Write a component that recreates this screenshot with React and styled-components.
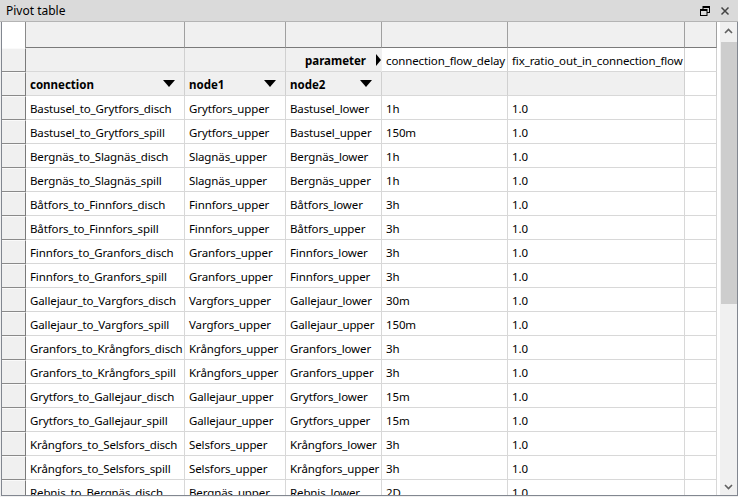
import React from "react";
import styled, { createGlobalStyle } from "styled-components";

const GlobalStyle = createGlobalStyle`
  html, body { margin: 0; padding: 0; background: #f0f0f0; }
  body { font-family: "Noto Sans", "Open Sans", sans-serif; font-size: 11.5px; color: #000; }
  * { box-sizing: border-box; }
`;

const COLS = [24, 159, 101, 96, 126, 177, 32];

const rows = [
  ["Bastusel_to_Grytfors_disch", "Grytfors_upper", "Bastusel_lower", "1h", "1.0"],
  ["Bastusel_to_Grytfors_spill", "Grytfors_upper", "Bastusel_upper", "150m", "1.0"],
  ["Bergnäs_to_Slagnäs_disch", "Slagnäs_upper", "Bergnäs_lower", "1h", "1.0"],
  ["Bergnäs_to_Slagnäs_spill", "Slagnäs_upper", "Bergnäs_upper", "1h", "1.0"],
  ["Båtfors_to_Finnfors_disch", "Finnfors_upper", "Båtfors_lower", "3h", "1.0"],
  ["Båtfors_to_Finnfors_spill", "Finnfors_upper", "Båtfors_upper", "3h", "1.0"],
  ["Finnfors_to_Granfors_disch", "Granfors_upper", "Finnfors_lower", "3h", "1.0"],
  ["Finnfors_to_Granfors_spill", "Granfors_upper", "Finnfors_upper", "3h", "1.0"],
  ["Gallejaur_to_Vargfors_disch", "Vargfors_upper", "Gallejaur_lower", "30m", "1.0"],
  ["Gallejaur_to_Vargfors_spill", "Vargfors_upper", "Gallejaur_upper", "150m", "1.0"],
  ["Granfors_to_Krångfors_disch", "Krångfors_upper", "Granfors_lower", "3h", "1.0"],
  ["Granfors_to_Krångfors_spill", "Krångfors_upper", "Granfors_upper", "3h", "1.0"],
  ["Grytfors_to_Gallejaur_disch", "Gallejaur_upper", "Grytfors_lower", "15m", "1.0"],
  ["Grytfors_to_Gallejaur_spill", "Gallejaur_upper", "Grytfors_upper", "15m", "1.0"],
  ["Krångfors_to_Selsfors_disch", "Selsfors_upper", "Krångfors_lower", "3h", "1.0"],
  ["Krångfors_to_Selsfors_spill", "Selsfors_upper", "Krångfors_upper", "3h", "1.0"],
  ["Rebnis_to_Bergnäs_disch", "Bergnäs_upper", "Rebnis_lower", "2D", "1.0"],
];

const Window = styled.div`
  width: 738px;
  height: 497px;
  display: flex;
  flex-direction: column;
  background: #f0f0f0;
  overflow: hidden;
`;

const TitleBar = styled.div`
  height: 22px;
  flex: none;
  display: flex;
  align-items: center;
  padding: 0 6px 0 6px;
  background: #dadada;
  border-bottom: 1px solid #b4b4b4;
  color: #000;
  font-size: 12px;
`;

const Title = styled.span`
  flex: 1;
  line-height: 20px;
`;

const TitleIcons = styled.div`
  display: flex;
  align-items: center;
  gap: 10px;
  padding-right: 2px;
`;

const Body = styled.div`
  height: 474px;
  flex: none;
  display: flex;
  margin-left: 1px;
  border-left: 1px solid #828790;
  border-right: 1px solid #828790;
  border-bottom: 1px solid #828790;
  background: #fff;
`;

const Viewport = styled.div`
  flex: 1;
  overflow: hidden;
  background: #fff;
`;

const Row = styled.div`
  display: flex;
  height: ${(p) => p.$h || 24}px;
`;

const Cell = styled.div`
  flex: none;
  width: ${(p) => p.$w}px;
  height: 100%;
  display: flex;
  align-items: center;
  padding: 2px 3px 0 4px;
  white-space: nowrap;
  overflow: hidden;
  letter-spacing: -0.12px;
  border-right: 1px solid #d8d8d8;
  border-bottom: 1px solid #d8d8d8;
  background: #fff;
`;

const Corner = styled(Cell)`
  border-right: 1px solid #8a8a8a;
  border-bottom: none;
  background: #fff;
`;

const TopHeader = styled(Cell)`
  background: #f0f0f0;
  border-right: 1px solid #a0a0a0;
  border-bottom: 1px solid #7a7a7a;
`;

const RowHeader = styled(Cell)`
  background: #f0f0f0;
  border-right: 1px solid #7a7a7a;
  border-bottom: 1px solid #8a8a8a;
  border-top: 1px solid #fafafa;
`;

const PivotCell = styled(Cell)`
  background: ${(p) => (p.$white ? "#fff" : "#f0f0f0")};
  font-weight: ${(p) => (p.$bold ? 700 : 400)};
  letter-spacing: ${(p) => (p.$bold ? "0" : "-0.12px")};
  justify-content: ${(p) => (p.$end ? "flex-end" : "space-between")};
  padding-right: ${(p) => (p.$pr != null ? p.$pr : 3)}px;
  border-right-color: ${(p) => (p.$noRight ? "transparent" : "#d0d0d0")};
`;

const DownTri = styled.span`
  flex: none;
  width: 0;
  height: 0;
  margin-top: -2px;
  border-left: 6px solid transparent;
  border-right: 6px solid transparent;
  border-top: 7px solid #000;
`;

const RightTri = styled.span`
  flex: none;
  width: 0;
  height: 0;
  margin-left: 10px;
  margin-top: -2px;
  border-top: 6px solid transparent;
  border-bottom: 6px solid transparent;
  border-left: 5px solid #000;
`;

const Scrollbar = styled.div`
  width: 17px;
  flex: none;
  display: flex;
  flex-direction: column;
  background: #f0f0f0;
`;

const ArrowBtn = styled.div`
  height: 17px;
  flex: none;
  display: flex;
  align-items: center;
  justify-content: center;
`;

const Track = styled.div`
  flex: 1;
  display: flex;
  flex-direction: column;
  padding-top: 3px;
`;

const Thumb = styled.div`
  height: 262px;
  margin: 0 0 0 1px;
  background: #cdcdcd;
`;

const Chevron = ({ up }) => (
  <svg width="9" height="6" viewBox="0 0 9 6">
    <path
      d={up ? "M1 5 L4.5 1.5 L8 5" : "M1 1 L4.5 4.5 L8 1"}
      fill="none"
      stroke="#606060"
      strokeWidth="1.6"
    />
  </svg>
);

const FloatIcon = () => (
  <svg width="10" height="10" viewBox="0 0 10 10">
    <rect x="3" y="0.5" width="6.5" height="6" fill="none" stroke="#000" strokeWidth="1" />
    <rect x="3" y="0.5" width="6.5" height="1.5" fill="#000" />
    <rect x="0.5" y="3.5" width="6.5" height="6" fill="#dadada" stroke="#000" strokeWidth="1" />
    <rect x="0.5" y="3.5" width="6.5" height="1.5" fill="#000" />
  </svg>
);

const CloseIcon = () => (
  <svg width="10" height="10" viewBox="0 0 10 10">
    <path d="M1.5 1.5 L8.5 8.5 M8.5 1.5 L1.5 8.5" stroke="#444" strokeWidth="1.5" />
  </svg>
);

export default function App() {
  return (
    <>
      <GlobalStyle />
      <Window>
        <TitleBar>
          <Title>Pivot table</Title>
          <TitleIcons>
            <FloatIcon />
            <CloseIcon />
          </TitleIcons>
        </TitleBar>
        <Body>
          <Viewport>
            <Row $h={26}>
              <Corner $w={COLS[0]} />
              {COLS.slice(1).map((w, i) => (
                <TopHeader key={i} $w={w} />
              ))}
            </Row>
            <Row>
              <RowHeader $w={COLS[0]} />
              <PivotCell $w={COLS[1]} />
              <PivotCell $w={COLS[2]} />
              <PivotCell $w={COLS[3]} $bold $end $pr={0} $noRight>
                parameter
                <RightTri />
              </PivotCell>
              <PivotCell $w={COLS[4]} $white>connection_flow_delay</PivotCell>
              <PivotCell $w={COLS[5]} $white>fix_ratio_out_in_connection_flow</PivotCell>
              <PivotCell $w={COLS[6]} $white />
            </Row>
            <Row>
              <RowHeader $w={COLS[0]} />
              <PivotCell $w={COLS[1]} $bold $pr={9}>
                connection
                <DownTri />
              </PivotCell>
              <PivotCell $w={COLS[2]} $bold $pr={9}>
                node1
                <DownTri />
              </PivotCell>
              <PivotCell $w={COLS[3]} $bold $pr={9}>
                node2
                <DownTri />
              </PivotCell>
              <PivotCell $w={COLS[4]} />
              <PivotCell $w={COLS[5]} />
              <PivotCell $w={COLS[6]} $white />
            </Row>
            {rows.map((r, i) => (
              <Row key={i}>
                <RowHeader $w={COLS[0]} />
                {r.map((v, j) => (
                  <Cell key={j} $w={COLS[j + 1]}>
                    {v}
                  </Cell>
                ))}
                <Cell $w={COLS[6]} />
              </Row>
            ))}
          </Viewport>
          <Scrollbar>
            <ArrowBtn>
              <Chevron up />
            </ArrowBtn>
            <Track>
              <Thumb />
            </Track>
            <ArrowBtn>
              <Chevron />
            </ArrowBtn>
          </Scrollbar>
        </Body>
      </Window>
    </>
  );
}
